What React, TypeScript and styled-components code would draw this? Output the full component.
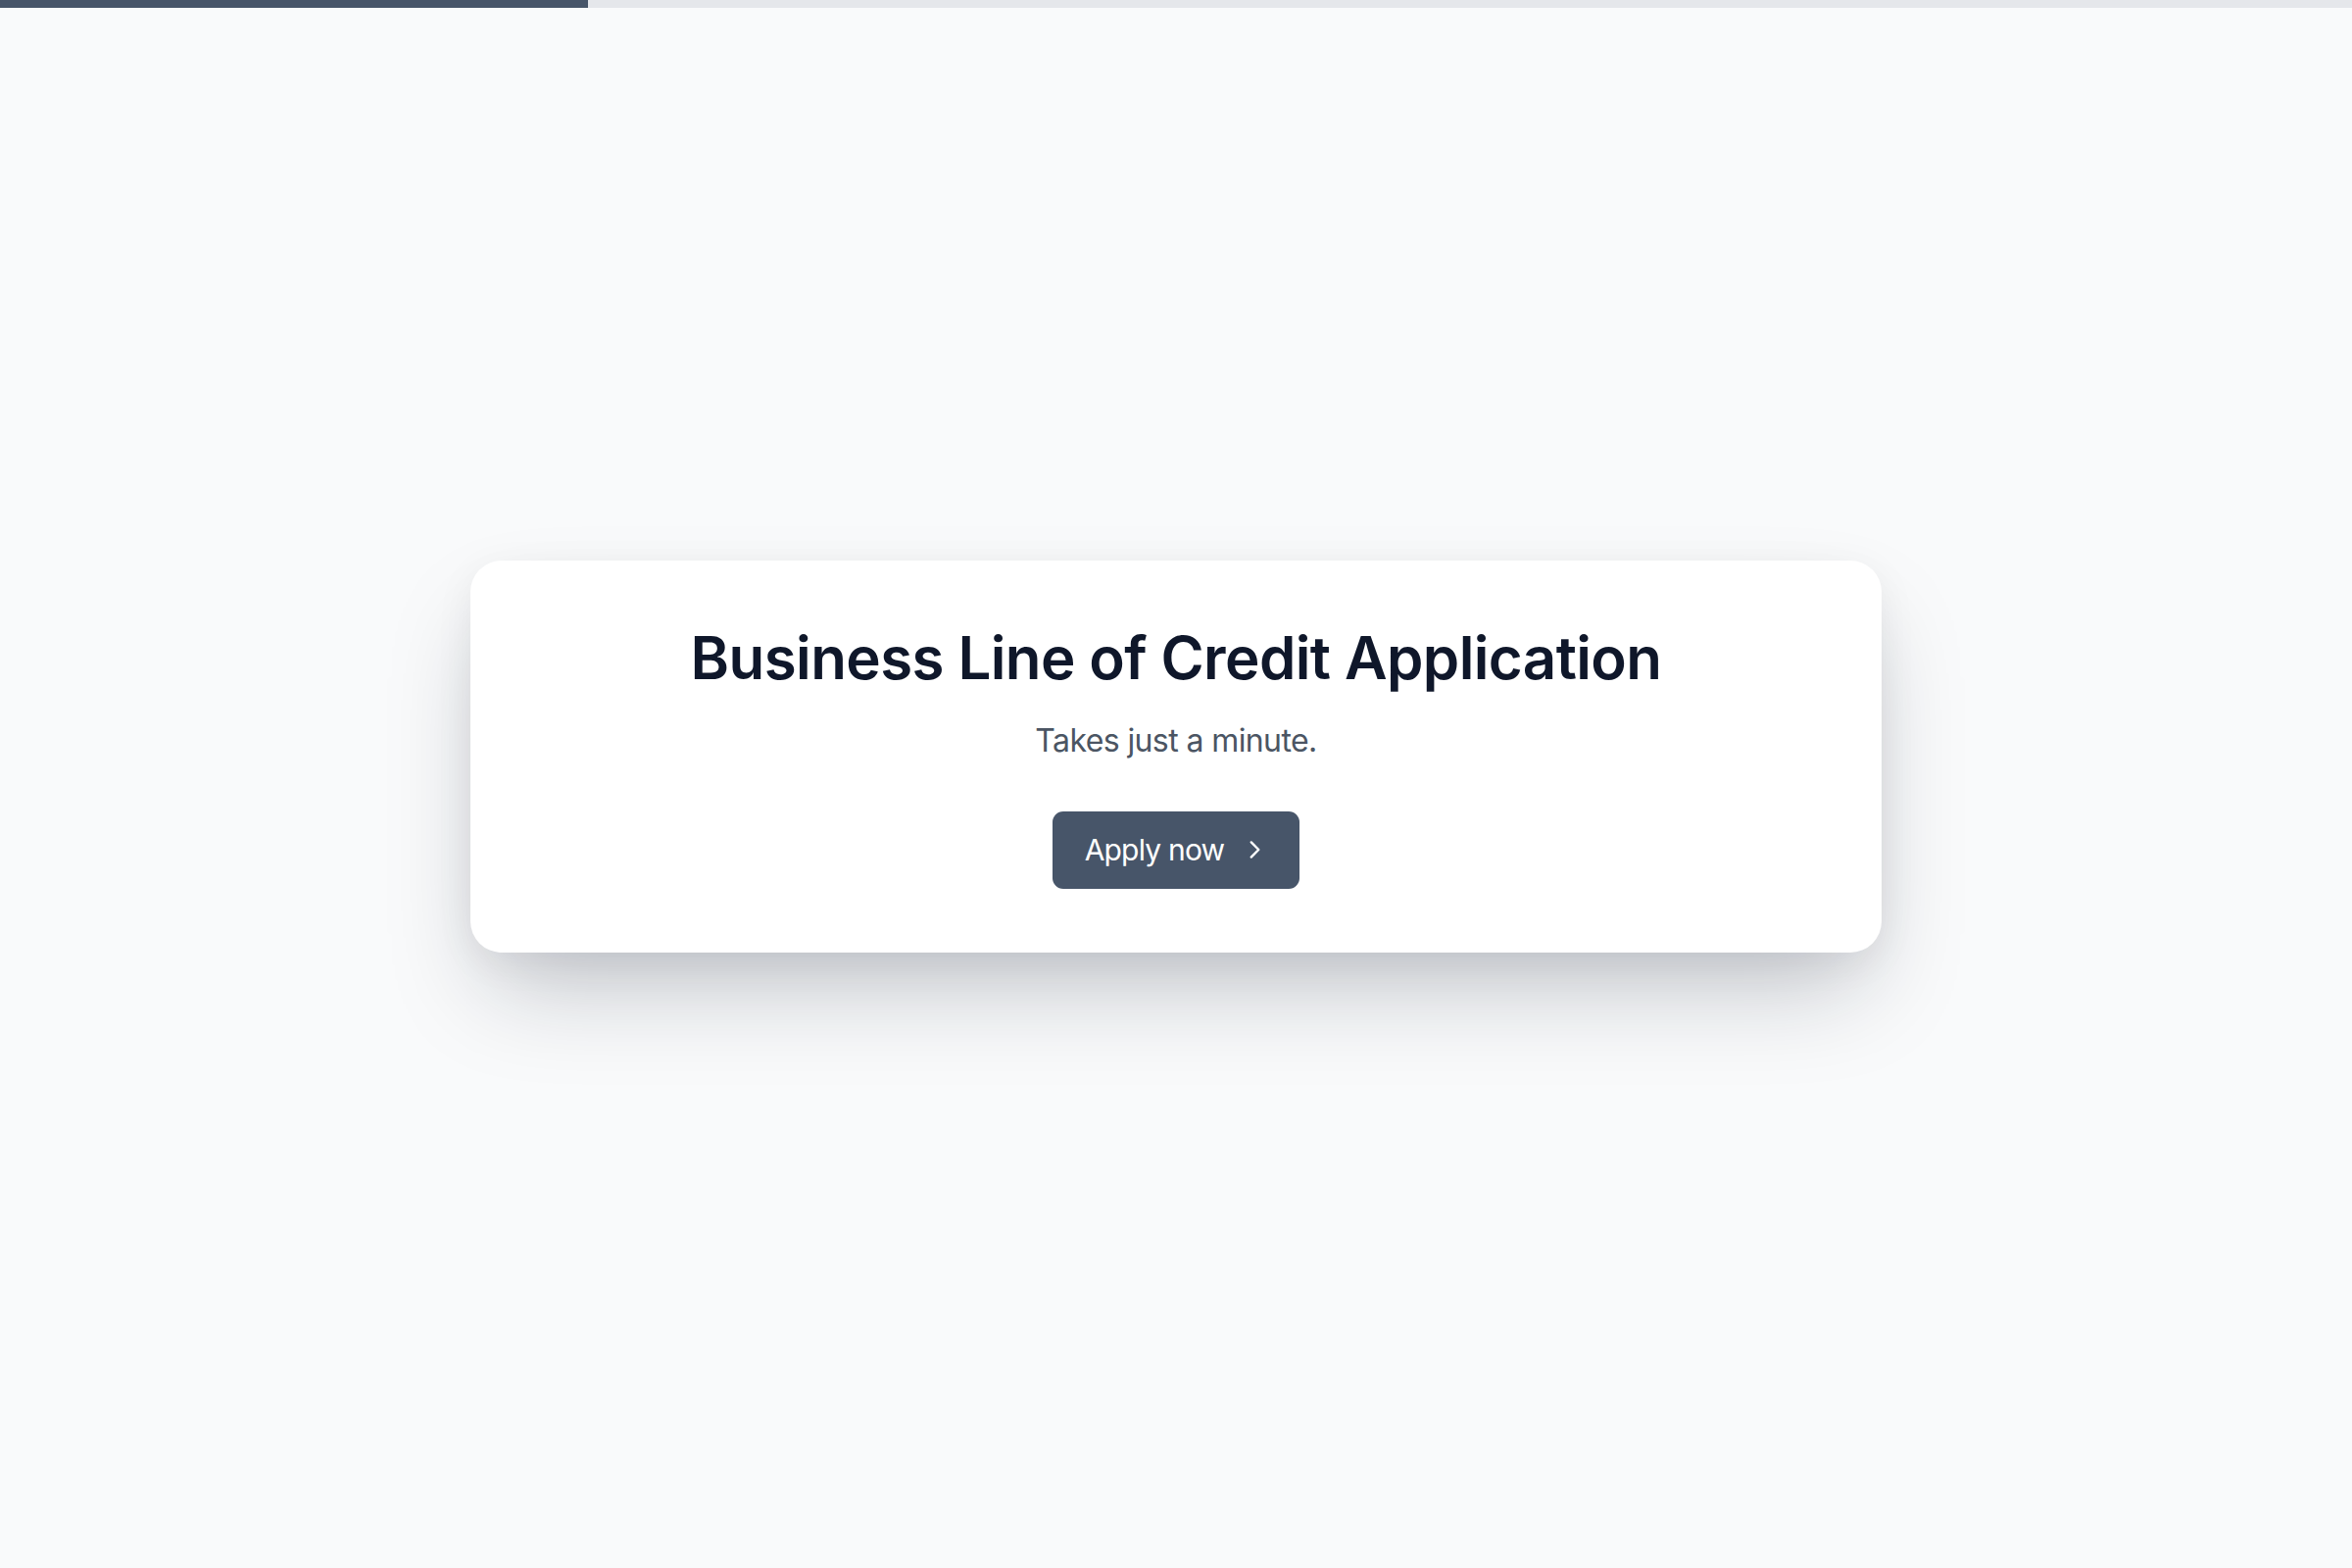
import React from "react";
import styled, { createGlobalStyle } from "styled-components";

const Global = createGlobalStyle`
  html, body { margin: 0; padding: 0; }
  body {
    background: #f9fafb;
    font-family: Inter, "Noto Sans", "Liberation Sans", sans-serif;
    min-height: 100vh;
  }
`;

const Page = styled.div`
  min-height: 1600px;
  display: flex;
  flex-direction: column;
`;

const ProgressTrack = styled.div`
  height: 8px;
  width: 100%;
  background: #e5e7eb;
  display: flex;
`;

const ProgressFill = styled.div`
  height: 100%;
  background: #475569;
`;

const Main = styled.main`
  display: flex;
  justify-content: center;
  padding-top: 564px;
`;

const Card = styled.section`
  width: 1440px;
  height: 400px;
  box-sizing: border-box;
  background: #ffffff;
  border-radius: 32px;
  box-shadow: 0 50px 100px -20px rgba(15, 23, 42, 0.25), 0 10px 40px rgba(15, 23, 42, 0.06);
  display: flex;
  flex-direction: column;
  align-items: center;
  padding-top: 63px;
`;

const Title = styled.h1`
  margin: 0;
  font-size: 60px;
  line-height: 1.2;
  font-weight: 600;
  color: #0f172a;
  letter-spacing: -0.6px;
`;

const Subtitle = styled.p`
  margin: 28px 0 0;
  font-size: 32px;
  line-height: 1.3;
  font-weight: 400;
  color: #4b5563;
  letter-spacing: -0.6px;
`;

const Button = styled.button`
  margin-top: 51px;
  width: 252px;
  height: 79px;
  border: none;
  border-radius: 11px;
  background: #475569;
  color: #ffffff;
  font-family: inherit;
  font-size: 30px;
  font-weight: 400;
  letter-spacing: -0.8px;
  display: flex;
  align-items: center;
  justify-content: center;
  gap: 18px;
  cursor: pointer;
`;

const Chevron = () => (
  <svg width="26" height="26" viewBox="0 0 24 24" fill="none" stroke="#ffffff" strokeWidth="2.2" strokeLinecap="round" strokeLinejoin="round">
    <path d="M9 5l7 7-7 7" />
  </svg>
);

export default function App() {
  const progress = 25;
  return (
    <Page>
      <Global />
      <ProgressTrack>
        <ProgressFill style={{ width: `${progress}%` }} />
      </ProgressTrack>
      <Main>
        <Card>
          <Title>Business Line of Credit Application</Title>
          <Subtitle>Takes just a minute.</Subtitle>
          <Button>
            Apply now
            <Chevron />
          </Button>
        </Card>
      </Main>
    </Page>
  );
}
